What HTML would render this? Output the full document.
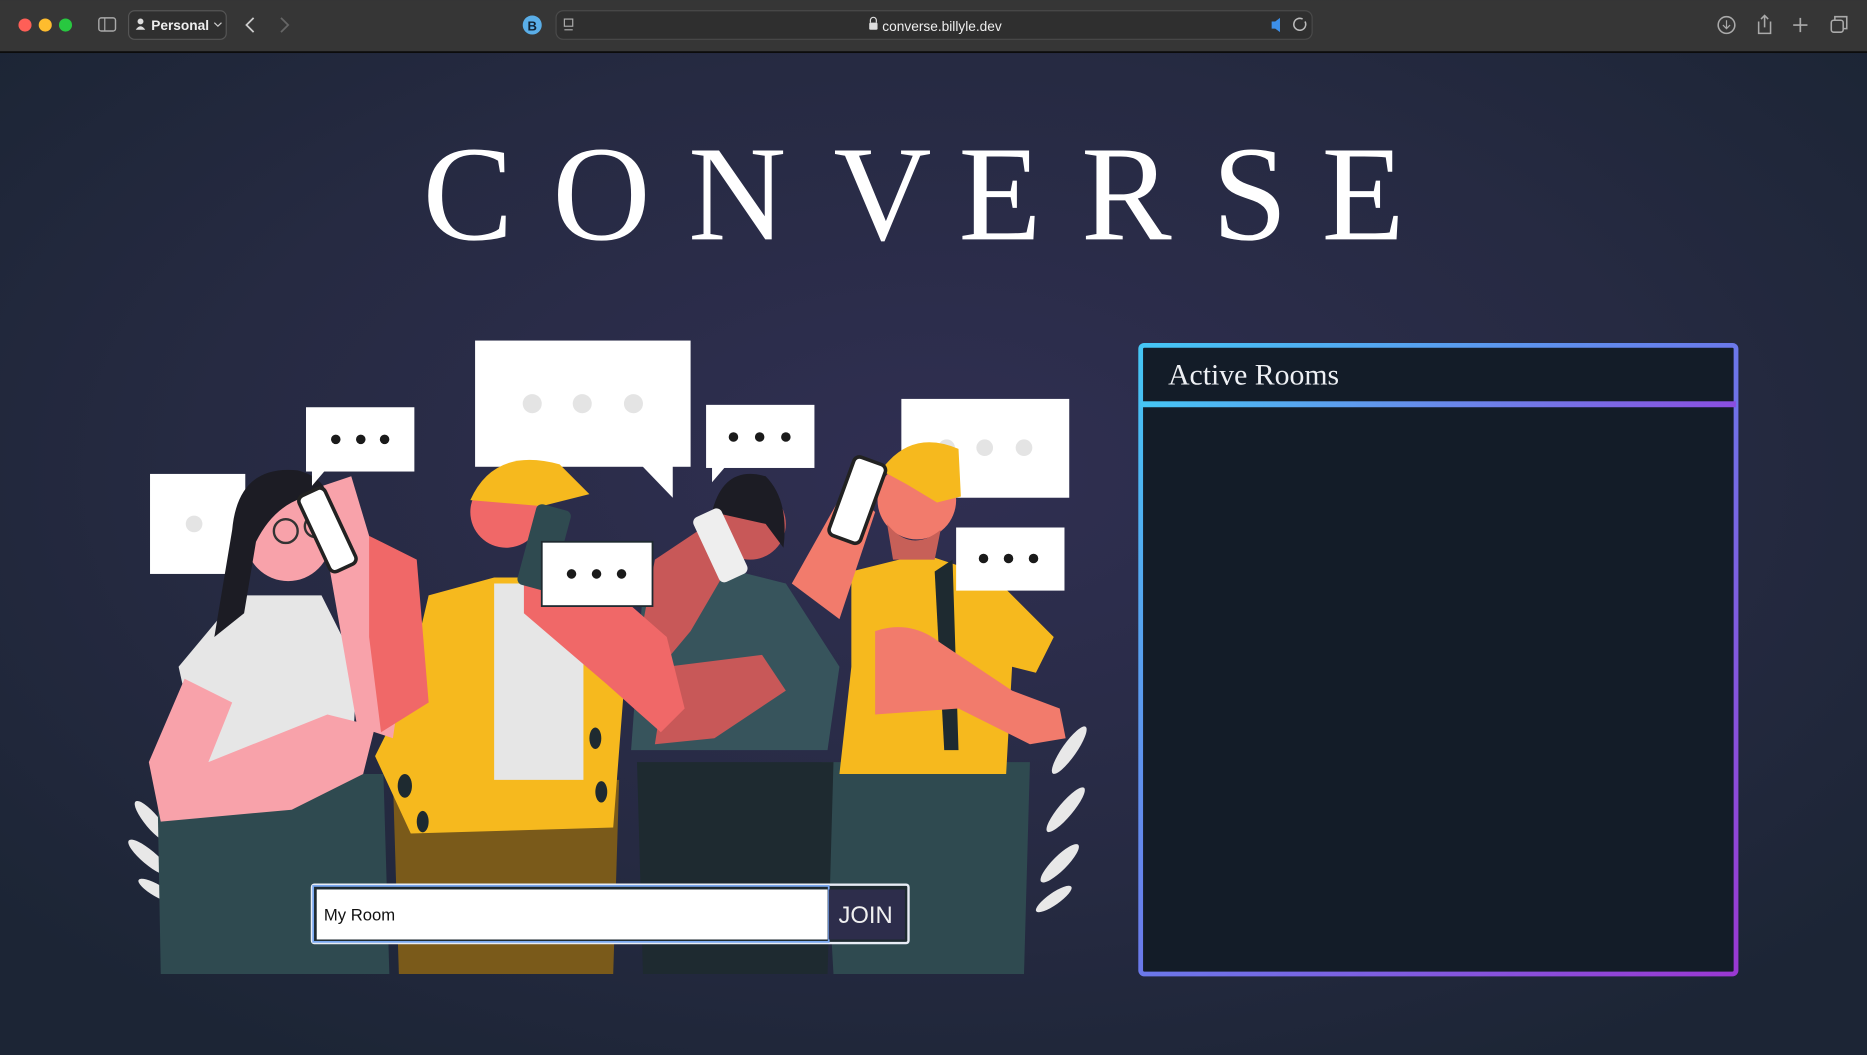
<!DOCTYPE html>
<html><head><meta charset="utf-8"><style>
html,body{margin:0;padding:0;width:1867px;height:1055px;overflow:hidden;background:#1e2637}
svg{display:block}
</style></head><body>
<svg width="1867" height="1055" viewBox="0 0 1568 886" xmlns="http://www.w3.org/2000/svg">
<defs>
<radialGradient id="bg" cx="0.5" cy="0.45" r="0.65">
<stop offset="0" stop-color="#302f52"/><stop offset="0.6" stop-color="#262a42"/><stop offset="1" stop-color="#1c2535"/>
</radialGradient>
<linearGradient id="pb" x1="0" y1="0" x2="1" y2="1">
<stop offset="0" stop-color="#45c6f5"/><stop offset="0.5" stop-color="#6b78ea"/><stop offset="1" stop-color="#9a38d2"/>
</linearGradient>
<linearGradient id="hl" x1="0" y1="0" x2="1" y2="0">
<stop offset="0" stop-color="#45c6f5"/><stop offset="1" stop-color="#8a4ee0"/>
</linearGradient>
</defs>
<rect width="1568" height="886" fill="url(#bg)"/>
<!-- toolbar -->
<rect width="1568" height="44" fill="#363636"/>
<rect y="43" width="1568" height="1.5" fill="#0c0c0c"/>
<circle cx="21" cy="21" r="5.5" fill="#fe5f57"/><circle cx="38" cy="21" r="5.5" fill="#febc2e"/><circle cx="55" cy="21" r="5.5" fill="#28c840"/>
<rect x="83" y="15" width="14" height="11" rx="2" fill="none" stroke="#aaa" stroke-width="1.2"/><line x1="88" y1="15" x2="88" y2="26" stroke="#aaa"/>
<rect x="108" y="9" width="82" height="24" rx="5" fill="#2f2f2f" stroke="#555"/>
<circle cx="118" cy="18" r="2.5" fill="#ddd"/><path d="M114 25 q4-6 8 0z" fill="#ddd"/>
<text x="127" y="25" font-family="Liberation Sans,sans-serif" font-size="11.5" font-weight="bold" fill="#eee">Personal</text>
<path d="M180 19l3 3 3-3" stroke="#ccc" fill="none"/>
<path d="M213 15l-6 6 6 6" stroke="#ccc" fill="none" stroke-width="1.5"/>
<path d="M236 15l6 6-6 6" stroke="#666" fill="none" stroke-width="1.5"/>
<circle cx="447" cy="21" r="8" fill="#5aaee8"/><text x="447" y="25.5" text-anchor="middle" font-family="Liberation Sans,sans-serif" font-size="11" font-weight="bold" fill="#123">B</text>
<rect x="467" y="9" width="635" height="24" rx="6" fill="#2f2f2f" stroke="#4a4a4a"/>
<rect x="474" y="16" width="7" height="6" fill="none" stroke="#aaa"/><line x1="474" y1="25" x2="481" y2="25" stroke="#aaa"/>
<rect x="730" y="19" width="7" height="6" rx="1" fill="#ddd"/><path d="M731 19v-2a2.5 2.5 0 0 1 5 0v2" stroke="#ddd" fill="none"/>
<text x="741" y="26" font-family="Liberation Sans,sans-serif" font-size="11.5" fill="#eee">converse.billyle.dev</text>
<path d="M1068 18h3l4-3v12l-4-3h-3z" fill="#3d8fe8"/>
<path d="M1096 18a5 5 0 1 1-2-2" stroke="#bbb" fill="none" stroke-width="1.3"/>
<circle cx="1450" cy="21" r="7" fill="none" stroke="#aaa" stroke-width="1.3"/><path d="M1450 17v7M1447 21l3 3 3-3" stroke="#aaa" fill="none"/>
<path d="M1477 18v10h10v-10M1482 13v10M1479 16l3-3 3 3" stroke="#aaa" fill="none" stroke-width="1.3"/>
<path d="M1512 15v12M1506 21h12" stroke="#aaa" stroke-width="1.4"/>
<rect x="1538" y="17" width="10" height="10" rx="2" fill="none" stroke="#aaa" stroke-width="1.3"/><path d="M1541 17v-3h10v10h-3" stroke="#aaa" fill="none" stroke-width="1.3"/>
<!-- title -->
<g font-family="Liberation Serif,serif" font-size="114" fill="#fff">
<text x="355" y="201">C</text><text x="464" y="201">O</text><text x="578" y="201">N</text><text x="700" y="201">V</text><text x="805" y="201">E</text><text x="908" y="201">R</text><text x="1018" y="201">S</text><text x="1110" y="201">E</text>
</g>
<!-- illustration -->
<g>
<g fill="#e8e8e8">
<ellipse cx="128" cy="690" rx="6" ry="22" transform="rotate(-40 128 690)"/>
<ellipse cx="125" cy="720" rx="6" ry="22" transform="rotate(-50 125 720)"/>
<ellipse cx="132" cy="748" rx="5" ry="18" transform="rotate(-60 132 748)"/>
<ellipse cx="898" cy="630" rx="6" ry="24" transform="rotate(35 898 630)"/>
<ellipse cx="895" cy="680" rx="6" ry="24" transform="rotate(40 895 680)"/>
<ellipse cx="890" cy="725" rx="6" ry="22" transform="rotate(45 890 725)"/>
<ellipse cx="885" cy="755" rx="5" ry="18" transform="rotate(55 885 755)"/>
</g>
<rect x="126" y="398" width="80" height="84" fill="#fff"/><circle cx="163" cy="440" r="7" fill="#e4e4e4"/>
<rect x="757" y="335" width="141" height="83" fill="#fff"/>
<circle cx="795" cy="376" r="7" fill="#e4e4e4"/><circle cx="827" cy="376" r="7" fill="#e4e4e4"/><circle cx="860" cy="376" r="7" fill="#e4e4e4"/>
<rect x="399" y="286" width="181" height="106" fill="#fff"/><path d="M538 390l27 28v-28z" fill="#fff"/>
<circle cx="447" cy="339" r="8" fill="#e4e4e4"/><circle cx="489" cy="339" r="8" fill="#e4e4e4"/><circle cx="532" cy="339" r="8" fill="#e4e4e4"/>
<path d="M690 640h175l-5 178H700z" fill="#2f4a50"/>
<path d="M715 480l60-15 60 20 50 50 -15 30-20 -5 -5 90h-140l10-90z" fill="#f6b91e"/>
<path d="M785 480l15 -10 5 160 -12 0z" fill="#1e2a30"/>
<circle cx="770" cy="420" r="33" fill="#f27b6c"/>
<path d="M740 395q25-35 65-18l2 40-20 5-25-15z" fill="#f6b91e"/>
<path d="M745 440q20 25 45 5l-5 25h-35z" fill="#c76058"/>
<path d="M735 530q30-10 55 10l60 40 40 15 5 25-30 5-60-30-70 5z" fill="#f27b6c"/>
<path d="M665 490l45-80 25 20-30 90z" fill="#f27b6c"/>
<rect x="706" y="385" width="28" height="70" rx="5" fill="#fff" stroke="#222" stroke-width="3" transform="rotate(20 720 420)"/>
<path d="M535 640h165l-5 178H540z" fill="#1e2a30"/>
<path d="M540 495l60-20 60 15 45 70 -10 70h-165z" fill="#37545c"/>
<circle cx="630" cy="440" r="30" fill="#c85858"/>
<path d="M598 430q10-40 45-30 20 20 15 60l-15-20z" fill="#1c1c24"/>
<path d="M550 470l45-30 20 30-35 60-25 30-20 -10z" fill="#c85858"/>
<path d="M560 560l80 -10 20 30-60 40-50 5z" fill="#c85858"/>
<rect x="592" y="428" width="26" height="60" rx="5" fill="#eee" transform="rotate(-25 605 458)"/>
<path d="M330 655h190l-5 163H335z" fill="#7a5a1a"/>
<path d="M360 500l55-15 70 0 40 80-10 130-170 5-30-65 25-50z" fill="#f6b91e"/>
<path d="M415 490h75v165h-75z" fill="#e6e6e6"/>
<g fill="#1e2a30"><ellipse cx="340" cy="660" rx="6" ry="10"/><ellipse cx="355" cy="690" rx="5" ry="9"/><ellipse cx="500" cy="620" rx="5" ry="9"/><ellipse cx="505" cy="665" rx="5" ry="9"/></g>
<circle cx="425" cy="430" r="30" fill="#f06868"/>
<path d="M395 420q20-45 75-30l25 25-40 10z" fill="#f6b91e"/>
<path d="M440 470l40-5 80 70 15 60-20 20-45-40-70-60z" fill="#f06868"/>
<rect x="442" y="425" width="30" height="70" rx="5" fill="#2f4a50" transform="rotate(15 457 460)"/>
<path d="M132 650h190l5 168H135z" fill="#2f4a50"/>
<path d="M150 560l50-60 70 0 30 60-5 90H170z" fill="#e6e6e6"/>
<path d="M125 640l30-70 40 20-20 50 100-40 40 10-10 40-60 30-110 10z" fill="#f8a2aa"/>
<path d="M265 410l30 -10 45 150-10 70-30 -10z" fill="#f8a2aa"/>
<path d="M310 450l40 20 10 120-40 25-10-80z" fill="#f06868"/>
<circle cx="242" cy="452" r="36" fill="#f8a2aa"/>
<path d="M195 445q5-55 55-50 20 5 25 20-40 0-60 40l-10 60-25 20z" fill="#1c1c24"/>
<circle cx="240" cy="446" r="10" fill="none" stroke="#333" stroke-width="2"/><circle cx="265" cy="442" r="9" fill="none" stroke="#333" stroke-width="2"/>
<rect x="263" y="410" width="24" height="70" rx="5" fill="#fff" stroke="#222" stroke-width="3" transform="rotate(-25 275 445)"/>
<rect x="257" y="342" width="91" height="54" fill="#fff"/><path d="M262 394l0 14 12-14z" fill="#fff"/>
<circle cx="282" cy="369" r="4" fill="#1a1a1a"/><circle cx="303" cy="369" r="4" fill="#1a1a1a"/><circle cx="323" cy="369" r="4" fill="#1a1a1a"/>
<rect x="593" y="340" width="91" height="53" fill="#fff"/><path d="M598 391l0 14 12-14z" fill="#fff"/>
<circle cx="616" cy="367" r="4" fill="#1a1a1a"/><circle cx="638" cy="367" r="4" fill="#1a1a1a"/><circle cx="660" cy="367" r="4" fill="#1a1a1a"/>
<rect x="455" y="455" width="93" height="54" fill="#fff" stroke="#1e2a30" stroke-width="1.5"/>
<circle cx="480" cy="482" r="4" fill="#1a1a1a"/><circle cx="501" cy="482" r="4" fill="#1a1a1a"/><circle cx="522" cy="482" r="4" fill="#1a1a1a"/>
<rect x="803" y="443" width="91" height="53" fill="#fff"/>
<circle cx="826" cy="469" r="4" fill="#1a1a1a"/><circle cx="847" cy="469" r="4" fill="#1a1a1a"/><circle cx="868" cy="469" r="4" fill="#1a1a1a"/>
</g>
<!-- input -->
<rect x="262" y="743" width="501" height="49" rx="2" fill="#1e2a30" stroke="#e8ecf5" stroke-width="2"/>
<rect x="263" y="744" width="433" height="47" fill="none" stroke="#7aa8f0" stroke-width="1.5"/>
<rect x="266" y="747" width="429" height="42" fill="#fff"/>
<rect x="696" y="747" width="64" height="42" fill="#2d2d4b"/>
<text x="272" y="773" font-family="Liberation Sans,sans-serif" font-size="14" fill="#111">My Room</text>
<text x="727" y="775" text-anchor="middle" font-family="Liberation Sans,sans-serif" font-size="20" fill="#f0f0f0">JOIN</text>
<!-- panel -->
<rect x="958" y="290" width="500" height="528" rx="3" fill="#131c28" stroke="url(#pb)" stroke-width="4"/>
<rect x="958" y="337" width="500" height="5" fill="url(#hl)"/>
<text x="981" y="323" font-family="Liberation Serif,serif" font-size="25" fill="#eef0f4">Active Rooms</text>
</svg>
</body></html>
